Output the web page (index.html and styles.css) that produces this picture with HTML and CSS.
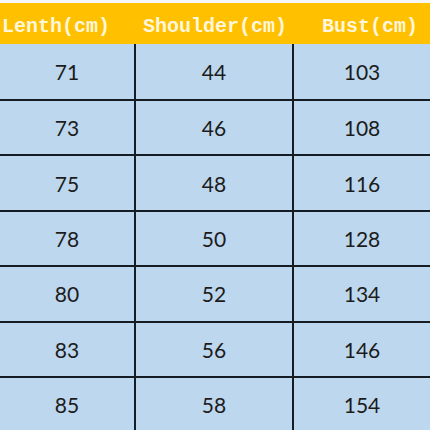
FILE: index.html
```html
<!DOCTYPE html>
<html>
<head>
<meta charset="utf-8">
<link rel="stylesheet" href="styles.css">
</head>
<body>
<div class="sheet">
  <div class="head">
    <div class="hc hc1">Lenth(cm)</div>
    <div class="hc hc2">Shoulder(cm)</div>
    <div class="hc hc3">Bust(cm)</div>
  </div>
  <div class="grid">
    <div class="c">71</div><div class="c">44</div><div class="c">103</div>
    <div class="c">73</div><div class="c">46</div><div class="c">108</div>
    <div class="c">75</div><div class="c">48</div><div class="c">116</div>
    <div class="c">78</div><div class="c">50</div><div class="c">128</div>
    <div class="c">80</div><div class="c">52</div><div class="c">134</div>
    <div class="c">83</div><div class="c">56</div><div class="c">146</div>
    <div class="c">85</div><div class="c">58</div><div class="c">154</div>
  </div>
</div>
</body>
</html>
```
FILE: styles.css
```css
html, body {
  margin: 0;
  padding: 0;
  background: #f4f6f8;
  width: 430px;
  height: 430px;
  overflow: hidden;
}
.sheet {
  padding-top: 3px;
}
.head {
  display: grid;
  grid-template-columns: 136px 158px 136px;
  height: 41px;
  background: #ffc000;
  align-items: center;
}
.hc {
  font-family: "Liberation Mono", "DejaVu Sans Mono", monospace;
  font-weight: bold;
  font-size: 20px;
  color: #fff6dc;
  padding-top: 6px;
  white-space: nowrap;
}
.hc1 { text-align: left; padding-left: 2px; }
.hc2 { text-align: center; }
.hc3 { text-align: right; padding-right: 12px; }
.grid {
  display: grid;
  grid-template-columns: 134px 156px 136px;
  grid-template-rows: 55px repeat(6, 53.4px);
  column-gap: 2px;
  row-gap: 2px;
  background: #161c24;
}
.c {
  background: #bdd7ee;
  display: flex;
  align-items: center;
  justify-content: center;
  font-family: Lato, "Open Sans", sans-serif;
  font-size: 21px;
  color: #1c1c1c;
}
```
